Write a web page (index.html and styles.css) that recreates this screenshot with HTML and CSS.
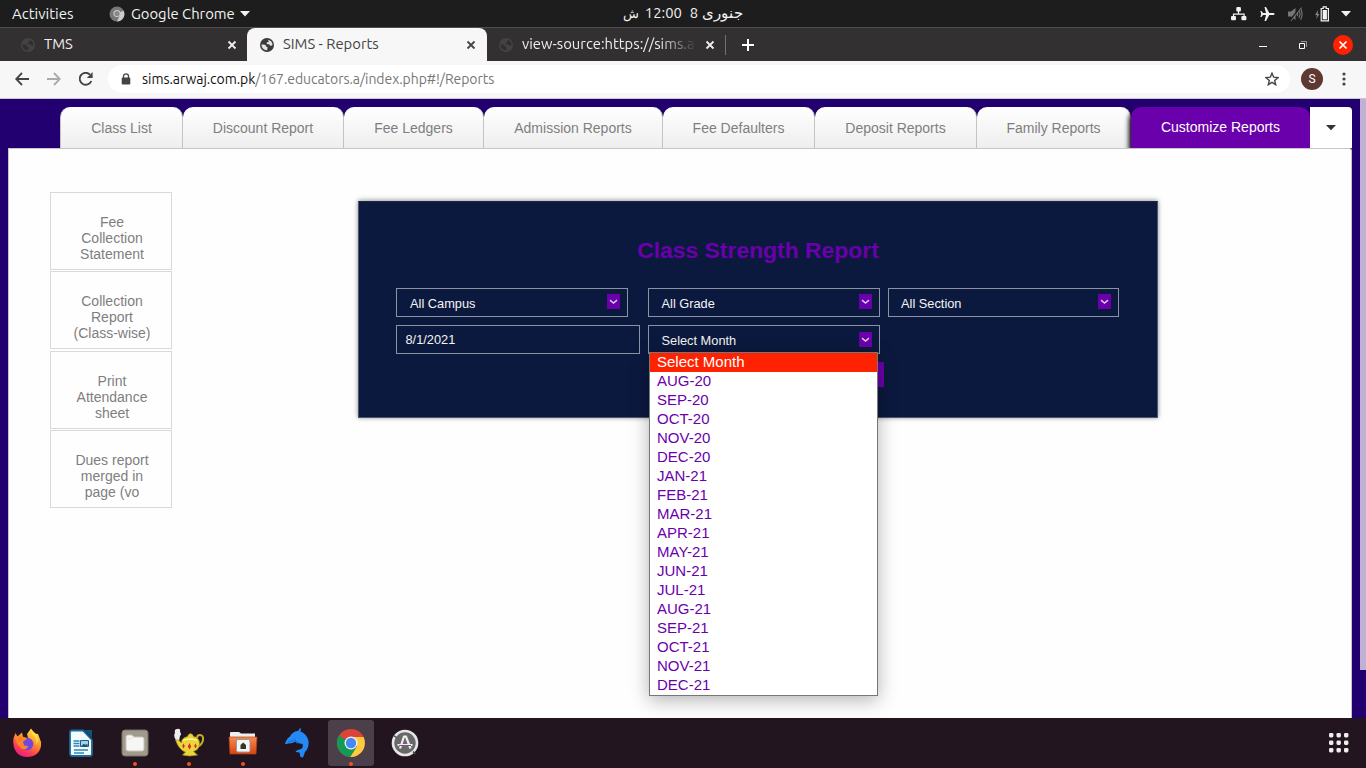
FILE: index.html
```html
<!DOCTYPE html>
<html lang="en">
<head>
<meta charset="utf-8">
<title>SIMS - Reports</title>
<link rel="stylesheet" href="styles.css">
</head>
<body>
<svg class="defs" width="0" height="0">
  <symbol id="globe" viewBox="0 0 16 16"><circle cx="8" cy="8" r="7" fill="currentColor"/><path class="land" d="M2.600 7.600c1.500-.2 3.500 0 4.300.9.400 1 .2 1.500 1.500 1.600.4 1-.2 1.600-.2 3.200C5 13.500 2.300 11 2.600 7.600ZM9 2.700c2.800.4 4.600 2.800 4.500 5.400-.8.8-1.400.9-2.300.6-.6-1-1-1.500-2.400-1.400-1.200-.2-1.500-1-.8-1.800.6-.4 1.500-.1 1.700-1 .1-.700-.6-.900-.7-1.800Z"/></symbol>
  <symbol id="close" viewBox="0 0 10 10"><path d="M1.5 1.5 8.5 8.5M8.5 1.5 1.5 8.5" stroke="currentColor" stroke-width="1.8" fill="none"/></symbol>
  <symbol id="chev" viewBox="0 0 13 15"><path class="tile" d="M0 0h13v15H0z"/><path d="M3 6.2 6.5 9 10 6.2" fill="none" stroke="#dcc8ea" stroke-width="1.5"/></symbol>
</svg>

<header class="topbar">
  <div class="top-left">
    <span class="t-activities">Activities</span>
    <svg class="app-icon" width="16" height="16" viewBox="0 0 16 16"><circle cx="8" cy="8" r="7.5" fill="#777"/><path d="M8 8 14.5 4.5A7.5 7.5 0 0 1 8 15.5L11 9Z" fill="#ccc"/><circle cx="8" cy="7.5" r="3.6" fill="#ccc"/><circle cx="8" cy="7.5" r="2.6" fill="#888"/></svg>
    <span class="t-app">Google Chrome</span>
    <svg width="10" height="6" viewBox="0 0 10 6"><path d="M0 0h10L5 5.5Z" fill="#f2f2f2"/></svg>
  </div>
  <div class="clock" dir="rtl"><span class="c-month">جنوری</span><span class="c-day">8</span><span class="c-time">12:00</span><span class="c-pm">ش</span></div>
  <div class="tray">
    <svg width="16" height="14" viewBox="0 0 16 14"><path d="M7.5 4v3M2.5 10V7.2h10.600V10" fill="none" stroke="#f2f2f2" stroke-width="1.2"/><g fill="#f2f2f2"><rect x="5.300" y="0" width="4.600" height="4.400" rx="1"/><rect x="0" y="9" width="5" height="4.200" rx="1"/><rect x="10.400" y="9" width="5" height="4.200" rx="1"/></g></svg>
    <svg width="15" height="14" viewBox="0 0 15 14"><path d="M14.600 7c0-.7-.8-1-1.800-1H9.300L6 0H4.500l1.500 6H3L1.500 4H.4L1.200 7 .4 10h1.100L3 8h3l-1.500 6H6l3.300-6h3.500c1 0 1.800-.3 1.800-1Z" fill="#f2f2f2"/></svg>
    <svg width="15" height="14" viewBox="0 0 15 14"><path d="M0 4.5h3L7.500 1v12L3 9.500H0Z" fill="#777"/><path d="M9 5q1.400 2 0 4M10.800 3q2.400 4 0 8M12.600 1.200q3 5.800 0 11.600" fill="none" stroke="#777" stroke-width="1.100"/><path d="M12.500 0 2 13.500" stroke="#1d1d1d" stroke-width="1.500"/><path d="M13.500.5 3 14" stroke="#777"/></svg>
    <svg width="15" height="16" viewBox="0 0 15 16"><path d="M3.200 4 0 9h2L1.200 13 4.400 8H2.600Z" fill="#888"/><path d="M6.200 2.500h2V.8h3v1.700h2.200v12.300H6.200Z" fill="none" stroke="#f2f2f2" stroke-width="1.200"/><path d="M7.700 4h4.200v9.400H7.700Z" fill="#f2f2f2"/></svg>
    <svg width="10" height="6" viewBox="0 0 10 6"><path d="M0 0h10L5 5.5Z" fill="#f2f2f2"/></svg>
  </div>
</header>

<div class="tabstrip">
  <div class="btab first"><svg class="fav dim" width="16" height="16"><use href="#globe"/></svg><span class="tt">TMS</span><svg class="x" width="10" height="10"><use href="#close"/></svg></div>
  <div class="btab active"><svg class="fav" width="16" height="16"><use href="#globe"/></svg><span class="tt">SIMS - Reports</span><svg class="x" width="10" height="10"><use href="#close"/></svg></div>
  <div class="btab third"><svg class="fav dim" width="16" height="16"><use href="#globe"/></svg><span class="tt fade">view-source:https://sims.a</span><svg class="x" width="10" height="10"><use href="#close"/></svg></div>
  <svg class="plus" width="12" height="12" viewBox="0 0 12 12"><path d="M6 0v12M0 6h12" stroke="#fff" stroke-width="2"/></svg>
  <div class="win">
    <svg width="8" height="2" viewBox="0 0 8 2"><path d="M0 .5h8" stroke="#fff"/></svg>
    <svg width="8" height="8" viewBox="0 0 8 8"><path d="M2 .5h5.500V6" fill="none" stroke="#999"/><path d="M.5 2.500h5v5h-5Z" fill="none" stroke="#fff"/></svg>
    <svg width="20" height="20" viewBox="0 0 20 20"><circle cx="10" cy="10" r="10" fill="#ff2200"/><path d="m6.500 6.500 7 7m0-7-7 7" stroke="#fff" stroke-width="1.700"/></svg>
  </div>
</div>

<div class="toolbar">
  <svg width="14" height="14" viewBox="0 0 14 14"><path d="M14 7H1.500M7 1 1.200 7 7 13" fill="none" stroke="#444" stroke-width="1.800"/></svg>
  <svg width="14" height="14" viewBox="0 0 14 14"><path d="M0 7h12.500M7 1l5.800 6L7 13" fill="none" stroke="#aaa" stroke-width="1.800"/></svg>
  <svg width="14" height="14" viewBox="0 0 14 14"><path d="M12.300 9A6 6 0 1 1 11 2.600" fill="none" stroke="#444" stroke-width="1.900"/><path d="M13.600 0v6H7.800Z" fill="#444"/></svg>
  <div class="omni">
    <svg class="lock" width="10" height="12" viewBox="0 0 10 12"><path d="M2.500 5V3.200a2.500 2.300 0 0 1 5 0V5" fill="none" stroke="#444" stroke-width="1.300"/><rect x=".7" y="4.400" width="8.600" height="7.200" rx="1" fill="#444"/></svg>
    <span class="host">sims.arwaj.com.pk</span><span class="path">/167.educators.a/index.php#!/Reports</span>
    <svg class="star" width="14" height="14" viewBox="0 0 14 14"><path d="m7 1.200 1.700 4 4.300.4-3.300 2.800 1 4.300L7 10.400l-3.700 2.300 1-4.300L1 5.600l4.300-.4Z" fill="none" stroke="#444" stroke-width="1.400"/></svg>
  </div>
  <div class="avatar">S</div>
  <svg width="4" height="14" viewBox="0 0 4 14"><g fill="#444"><circle cx="2" cy="2" r="1.600"/><circle cx="2" cy="7" r="1.600"/><circle cx="2" cy="12" r="1.600"/></g></svg>
</div>

<main class="page">
  <nav class="tabs">
    <a class="w1">Class List</a><a class="w2">Discount Report</a><a class="w3">Fee Ledgers</a><a class="w4">Admission Reports</a><a class="w5">Fee Defaulters</a><a class="w6">Deposit Reports</a><a class="w7">Family Reports</a><a class="w8 current">Customize Reports</a><a class="more"><svg width="10" height="6" viewBox="0 0 10 6"><path d="M0 0h10L5 5.300Z" fill="#333"/></svg></a>
  </nav>
  <div class="scrollbar"></div>
  <section class="panel">
    <aside class="side">
      <a>Fee<br>Collection<br>Statement</a>
      <a>Collection<br>Report<br>(Class-wise)</a>
      <a>Print<br>Attendance<br>sheet</a>
      <a>Dues report<br>merged in<br>page (vo</a>
    </aside>
    <form class="card">
      <h2>Class Strength Report</h2>
      <div class="fields">
        <div class="sel campus">All Campus<svg width="13" height="15"><use href="#chev"/></svg></div>
        <div class="sel">All Grade<svg width="13" height="15"><use href="#chev"/></svg></div>
        <div class="sel section">All Section<svg width="13" height="15"><use href="#chev"/></svg></div>
        <div class="date">8/1/2021</div>
        <div class="sel month">Select Month<svg width="13" height="15"><use href="#chev"/></svg>
          <ul class="menu">
            <li class="on">Select Month</li><li>AUG-20</li><li>SEP-20</li><li>OCT-20</li><li>NOV-20</li><li>DEC-20</li><li>JAN-21</li><li>FEB-21</li><li>MAR-21</li><li>APR-21</li><li>MAY-21</li><li>JUN-21</li><li>JUL-21</li><li>AUG-21</li><li>SEP-21</li><li>OCT-21</li><li>NOV-21</li><li>DEC-21</li>
          </ul>
        </div>
      </div>
      <div class="submit"></div>
    </form>
  </section>
</main>

<footer class="dock">
  <div class="app"><svg width="30" height="30" viewBox="0 0 30 30">
    <defs><linearGradient id="ff" x1=".8" y1="0" x2=".3" y2="1"><stop offset="0" stop-color="#fff04a"/><stop offset=".4" stop-color="#ff9a2a"/><stop offset=".75" stop-color="#ff4050"/><stop offset="1" stop-color="#e8188a"/></linearGradient></defs>
    <path d="M1.500 10 3.500 5l2 3.500L10 4.500l1 4.500 5 1-1-4L19 .5l3 5L26 6l3 8c1 9-5 15-14 15S0 22 1.500 10Z" fill="url(#ff)"/><circle cx="15" cy="16" r="6.300" fill="#7048e0"/><path d="M3 9q5-2 9 0l3 2-4 2.500 1 4 4 .5q-1 4-5 3Q5 19 3 9Z" fill="#ff8528"/><path d="M19 1q0 5 4 8 2 4 1 8 4-5 0-11Z" fill="#ffdc3c"/></svg></div>
  <div class="app"><svg width="30" height="30" viewBox="0 0 30 30"><path d="M6 2.500h11L26 12v14a2 2 0 0 1-2 2H6a2 2 0 0 1-2-2V4.500Q4 2.500 6 2.500Z" fill="#f5fafc" stroke="#18699c" stroke-width="1.800"/><path d="M18 2h8v8Z" fill="#0e527e"/><path d="M7.500 13h6M7.500 15.500h6M7.500 18h6M8 22h14M8 25h10" stroke="#2989bd" stroke-width="1.300"/><path d="M14.500 12.500h8v6h-8Z" fill="#9ed2ed" stroke="#1a5e88"/><path d="m15.500 18 2-2 2 .8 2-.8v2Z" fill="#26475a"/></svg></div>
  <div class="app run"><svg width="30" height="30" viewBox="0 0 30 30"><rect x="2" y="2" width="26" height="26" rx="3" fill="#a09a8c" stroke="#777168"/><path d="M6 9q0-2 2-2h4l2 2h8q2 0 2 2v10q0 2-2 2H8q-2 0-2-2Z" fill="#f6f6f4" stroke="#c9c5b9"/><path d="M6 11h5l2-2" fill="none" stroke="#ddd"/></svg></div>
  <div class="app run"><svg width="30" height="30" viewBox="0 0 30 30"><path d="M2 12Q-1 8 1 5q-1-4 2-4 4-1 3 3 2 2 0 4l-1 5Z" fill="#eee"/><path d="M23 10q0-3 3-3 3.500 0 3 5-1 5-6 7" fill="none" stroke="#c4ac27" stroke-width="2"/><path d="M1.500 12h3l3 3q-.5-5 6-6.500l1-2 2-1 2 1 1 2q6 1 6 7t-6 8l4 3.500q-8 2-15 0l3-3Q5 22 1.500 12Z" fill="#ead53c" stroke="#a48d18" stroke-width=".7"/><path d="M9 12.500q7-3 14 0" fill="none" stroke="#fff7a0" stroke-width="1.300"/><path d="m9.500 15.500 1.300 2.500-1.300 2.500L8.200 18ZM15.500 15l1.700 3.500-1.700 3-1.700-3ZM21.500 15.500l1.300 2.500-1.300 2.500-1.300-2.500Z" fill="#d52c24"/></svg></div>
  <div class="app run"><svg width="30" height="30" viewBox="0 0 30 30"><defs><linearGradient id="fo" x2="0" y2="1"><stop stop-color="#f58a50"/><stop offset="1" stop-color="#d9450f"/></linearGradient></defs><path d="M2 12V5q0-1 1-1h8l2 1.500h14V12Z" fill="#eee"/><path d="M1 9h28l-1 17H2Z" fill="url(#fo)" stroke="#b94212" stroke-width=".7"/><rect x="8.500" y="11.500" width="13.500" height="12.500" rx="1.500" fill="#f5f5f3" stroke="#999"/><path d="M12.500 21v-4l2.700-2.500L18 17v4Z" fill="#37362c"/></svg></div>
  <div class="app"><svg width="30" height="30" viewBox="0 0 30 30"><path d="M3 15.500Q5 10 8 8.500 11 3 16 3q1-2.500 3-3l-.5 3.500Q25 6 26.500 13q.8 7-3.500 11l-2 5.500-2.500-.5-1-4.500-4-.5q1-2.500 4.500-2.500 4-2 2.500-5.500-4.500-.5-6.500-2.500-5 2.500-8 2-2 1-3 0Z" fill="#2289f7"/><path d="M6 14q4-1 7-2.500l2 4" fill="none" stroke="#166dcc"/></svg></div>
  <div class="app run selected"><svg width="30" height="30" viewBox="0 0 30 30"><circle cx="15" cy="15" r="14" fill="#dc4437"/><path d="M15 15 3 7.600A14 14 0 0 0 14.300 29L21 18.500Z" fill="#159957"/><path d="M15 9h12.500A14 14 0 0 1 14.300 29L21 18.500Z" fill="#fccb3f"/><circle cx="15" cy="15" r="6.500" fill="#f4f4f4"/><circle cx="15" cy="15" r="5.200" fill="#4688f1"/></svg></div>
  <div class="app"><svg width="30" height="30" viewBox="0 0 30 30"><circle cx="15" cy="15" r="12" fill="#686868" stroke="#e6e6e6" stroke-width="2.600"/><path d="m10 20.500 4-12h2l4.500 12M7.500 17h15" fill="none" stroke="#eee" stroke-width="2.200"/><path d="M9 17.500h12" stroke="#91458e"/><path d="m3.500 7.500 3 2M23 23.500l2.500 2.500" stroke="#444" stroke-width="1.500"/></svg></div>
  <svg class="grid" width="20" height="20" viewBox="0 0 20 20"><g fill="#f0eded"><rect width="4.400" height="4.400" rx="1.300"/><rect x="7.500" width="4.400" height="4.400" rx="1.300"/><rect x="15" width="4.400" height="4.400" rx="1.300"/><rect y="7.500" width="4.400" height="4.400" rx="1.300"/><rect x="7.500" y="7.500" width="4.400" height="4.400" rx="1.300"/><rect x="15" y="7.500" width="4.400" height="4.400" rx="1.300"/><rect y="15" width="4.400" height="4.400" rx="1.300"/><rect x="7.500" y="15" width="4.400" height="4.400" rx="1.300"/><rect x="15" y="15" width="4.400" height="4.400" rx="1.300"/></g></svg>
</footer>
</body>
</html>
```
FILE: styles.css
```css
* { box-sizing: border-box; }
body { margin: 0; width: 1366px; height: 768px; overflow: hidden; display: flex; flex-direction: column; background: #220070; font-family: "Liberation Sans", Arial, sans-serif; }
svg { display: block; flex: none; }
.defs { position: absolute; }

.topbar, .tabstrip, .toolbar { font-family: Ubuntu, "Noto Sans", sans-serif; white-space: nowrap; flex: none; }
.topbar { height: 27px; background: #1d1d1d; color: #f2f2f2; display: grid; grid-template-columns: 1fr auto 1fr; align-items: center; font-size: 14.8px; }
.top-left { display: flex; align-items: center; padding-left: 12px; }
.t-activities { width: 97px; font-size: 15px; }
.t-app { width: 104px; margin: 0 5px 0 6px; }
.clock { display: flex; font-size: 14px; line-height: 26px; height: 27px; }
.c-month { font-size: 14.5px; margin-left: 4px; }
.c-day { margin-left: 8px; font-size: 14.8px; }
.c-time { margin-left: 6px; font-size: 14.8px; }
.c-pm { font-size: 13px; }
.tray { display: flex; align-items: center; justify-content: flex-end; gap: 13px; padding-right: 15px; }
.tray svg:nth-child(4) { margin: 0 -2px 0 -1px; }

.tabstrip { height: 34px; background: #333031; border-top: 1px solid #504e4f; display: flex; align-items: center; color: #eee; font-size: 14.8px; }
.btab { height: 33px; display: flex; align-items: center; padding: 0 10px 0 20px; width: 247px; }
.btab.active { width: 240px; padding: 0 11px 0 12px; background: #f7f7f7; color: #444; border-radius: 8px 8px 0 0; }
.btab.third { width: 239px; padding-left: 11px; border-right: 1px solid #737172; height: 20px; }
.fav { color: #3c3c3c; margin-right: 8px; --land: #e4e4e4; }
.land { fill: var(--land); }
.dim { color: #444243; --land: #312e2f; }
.tt { flex: 1; overflow: hidden; line-height: 20px; height: 20px; margin-top: -2px; }
.x { margin-left: 8px; color: #444; }
.first .x, .third .x { color: #eee; }
.fade { -webkit-mask-image: linear-gradient(90deg, #000 78%, transparent 100%); mask-image: linear-gradient(90deg, #000 78%, transparent 100%); }
.plus { margin-left: 16px; }
.win { margin-left: auto; display: flex; align-items: center; padding-right: 13px; }
.win svg:nth-child(1) { margin: 4px 32px 0 0; }
.win svg:nth-child(2) { margin-right: 26px; }

.toolbar { height: 38px; background: #f7f7f7; border-bottom: 1px solid #c9c9c9; display: flex; align-items: center; padding: 0 20px 2px 15px; gap: 18px; font-size: 14px; }
.omni { flex: 1; height: 28px; margin: 1px -7px 0 -3px; border-radius: 14px; background: #fff; display: flex; align-items: center; padding: 0 11px 0 13px; letter-spacing: -.05px; }
.lock { margin-right: 11px; }
.host { color: #111; }
.path { color: #777; }
.star { margin-left: auto; }
.avatar { width: 22px; height: 22px; margin-right: 1px; border-radius: 50%; background: #5e3932; color: #fff; font: 12px/22px Roboto, sans-serif; text-align: center; }

.page { flex: 1; position: relative; padding: 8px 14px 0 8px; display: flex; flex-direction: column; min-height: 0; }
.tabs { display: flex; height: 41px; padding-left: 52px; flex: none; }
.tabs a { flex: none; height: 41px; line-height: 42px; text-align: center; font-size: 14px; color: #7f7f7f; background: linear-gradient(#fff, #eee); border-right: 1px solid #c4c4c4; border-radius: 10px 10px 0 0; }
.tabs .w1 { width: 123px; border-left: 1px solid #c4c4c4; }
.w2 { width: 161px; } .w3 { width: 140px; } .w4 { width: 179px; } .w5 { width: 152px; } .w6 { width: 162px; } .w7 { width: 154px; } .w8 { width: 179px; }
.tabs .current { background: #6a00ac; color: #fff; border: 0; line-height: 40px; box-shadow: -2px 3px 5px #000; clip-path: inset(0 0 0 -8px); }
.tabs .more { width: 42px; background: #fff; border: 0; border-radius: 0 4px 0 0; display: flex; align-items: center; justify-content: center; }
.scrollbar { position: absolute; right: 0; top: 0; width: 6px; height: 571px; background: #bfb0d5; }
.panel { flex: 1; width: 1344px; background: #fefefe; border: 1px solid #c6c6c6; border-bottom: 0; border-top-right-radius: 3px; display: flex; align-items: flex-start; padding-left: 41px; }
.side { margin-top: 43px; width: 122px; display: flex; flex-direction: column; gap: 1.33px; }
.side a { height: 78px; border: 1px solid #d9d9d9; padding: 21px 0 0 2px; font-size: 14px; line-height: 16px; text-align: center; color: #7f7f7f; }
.card { margin: 52px 0 0 186px; width: 800px; height: 217px; background: #0b193e; border: 1px solid #4b5670; border-top-color: #1c2846; box-shadow: 0 -1px 5px rgba(0,0,0,.35), 0 1px 4px rgba(0,0,0,.12); padding: 0 37px; }
.card h2 { margin: 34px 0 23px; font-size: 22.9px; line-height: 29px; text-align: center; color: #6a00ac; }
.fields { display: grid; grid-template-columns: 244px 232px 232px; gap: 8px; }
.sel, .date { height: 29px; border: 1px solid #8b92a0; color: #f4f4f4; font-size: 12.8px; line-height: 29px; }
.sel { width: 232px; padding: 0 7px 0 12.5px; display: flex; justify-content: space-between; position: relative; }
.sel.campus { padding-left: 13px; }
.sel.section { width: 231px; padding-left: 12px; }
.sel svg { margin-top: 5px; }
.sel.month svg { margin-top: 6px; }
.tile { fill: #6a00ac; }
.date { padding-left: 8.5px; line-height: 28px; }
.menu { position: absolute; z-index: 3; left: 0; top: 26px; width: 229px; height: 344px; margin: 0; padding: 0; list-style: none; background: #fff; border: 1px solid #777; box-shadow: 0 4px 18px rgba(0,0,0,.3); }
.menu li { height: 19px; padding-left: 7px; font-size: 15px; line-height: 17px; color: #6a00ac; }
.menu .on { background: #ff2200; color: #fff; }
.submit { width: 230px; height: 25px; margin: 8px 0 0 258px; background: #6a00ac; }

.dock { height: 50px; flex: none; background: #22151f; display: flex; align-items: center; padding: 0 17px 0 4px; gap: 8px; position: relative; z-index: 4; }
.app { width: 46px; height: 46px; display: flex; align-items: center; justify-content: center; position: relative; border-radius: 3px; }
.app.selected { background: #4b3f49; }
.app.run::after { content: ""; position: absolute; left: 21px; bottom: 0; width: 4px; height: 4px; border-radius: 50%; background: #ee5322; }
.grid { margin-left: auto; }
```
